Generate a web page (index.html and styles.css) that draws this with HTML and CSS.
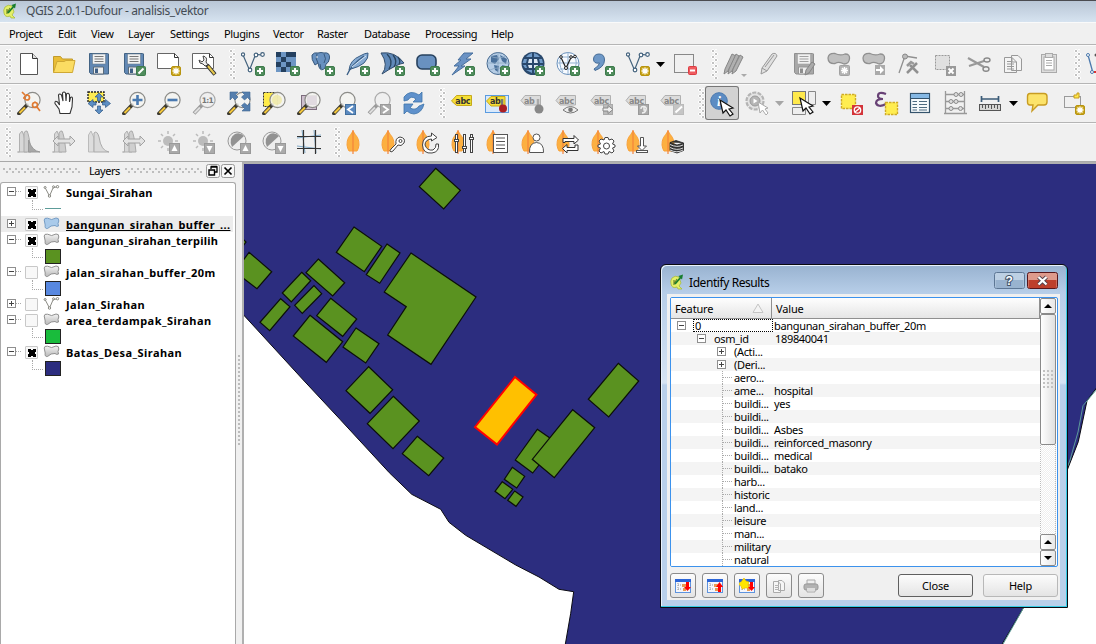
FILE: index.html
```html
<!DOCTYPE html>
<html lang="id">
<head>
<meta charset="utf-8">
<title>QGIS 2.0.1-Dufour - analisis_vektor</title>
<link rel="stylesheet" href="styles.css">
</head>
<body>
<svg class="defs" width="0" height="0">
  <defs>
    <linearGradient id="grey" x1="0" y1="0" x2="0" y2="1"><stop offset="0" stop-color="#f4f4f4"/><stop offset="1" stop-color="#b9b9b9"/></linearGradient>
    <symbol id="logo" viewBox="0 0 16 16"><path d="M3 4Q6 1 10 3L12 9L10 12L13 15H9L8 13Q3 15 2 10Q1 7 3 4Z" fill="#e4ef68" stroke="#a3b832" stroke-width=".7"/><path d="M5 10L8 5M5 6V11" stroke="#68852b" stroke-width="1.200"/><path d="M6 10L12 3" stroke="#167c2c" stroke-width="1.700"/><path d="M9.500 2L14 .5L13 5.500Z" fill="#167c2c"/></symbol>
    <symbol id="plus" viewBox="0 0 24 24"><rect x="14.500" y="14.500" width="9" height="9" rx="1.500" fill="#4f8c5c" stroke="#3d7b4b"/><path d="M19 16V22M16 19H22" stroke="#fff" stroke-width="2"/></symbol>
    <symbol id="star" viewBox="0 0 24 24"><rect x="14.500" y="14.500" width="9" height="9" rx="1.500" fill="#c9a51c" stroke="#b79410"/><path d="M19 15.500V22.500M15.500 19H22.500M16.500 16.500L21.500 21.500M21.500 16.500L16.500 21.500" stroke="#fff" stroke-width="1.300"/></symbol>
    <symbol id="greystar" viewBox="0 0 24 24"><rect x="12.500" y="13.500" width="10" height="10" rx="1" fill="#b3b3b3" stroke="#a2a2a2"/><path d="M17.500 15V22M14 18.500H21M15 16L20 21M20 16L15 21" stroke="#fff" stroke-width="1.400"/></symbol>
    <symbol id="handle" viewBox="0 0 24 24"><path d="M10 14L2 22.500" stroke="#3c3a30" stroke-width="3.800" stroke-linecap="round"/><path d="M8 16.500L2.500 22" stroke="#f3c63c" stroke-width="2.200"/></symbol>
    <symbol id="lens" viewBox="0 0 24 24"><use href="#handle"/><circle cx="15.500" cy="9" r="7.600" fill="#f4f4f0" fill-opacity=".88" stroke="#8c8c88" stroke-width="1.200"/></symbol>
    <symbol id="greylens" viewBox="0 0 24 24"><path d="M10 14L2 22.500" stroke="#999" stroke-width="3.800"/><path d="M8 16.500L2.500 22" stroke="#ddd" stroke-width="2"/><circle cx="15.500" cy="9" r="7.600" fill="#efefef" stroke="#aaa" stroke-width="1.200"/></symbol>
    <symbol id="vee" viewBox="0 0 24 24"><path d="M2 3L8.500 18L14 4Q15 2 21 3" fill="none" stroke="#44637e" stroke-width="1.200"/><g fill="#fff" stroke="#44637e" stroke-width="1.200"><circle cx="2" cy="2.500" r="1.600"/><circle cx="9" cy="18" r="1.800"/><circle cx="15" cy="3" r="1.800"/><circle cx="21.500" cy="2.500" r="1.800"/></g></symbol>
    <symbol id="leaf" viewBox="0 0 24 24"><path d="M7 1Q9.500 5 11.500 7.500Q13.200 11 13 15Q12.500 19 11 21H3Q1.500 19 1 15Q.8 11 2.500 7.500Q4.500 5 7 1Z" fill="#fcb041" stroke="#f9a23a"/><path d="M7 0V24" stroke="#f3843a" stroke-width="1.200"/></symbol>
    <symbol id="tag" viewBox="0 0 24 24"><path d="M1.500 10L6.500 4.500H21.500V14.500H6.500Z" fill="#f5de35" stroke="#c7a91b"/><text x="5.300" y="12.700" class="abc">abc</text></symbol>
    <symbol id="greytag" viewBox="0 0 24 24"><path d="M1 9.500L5 4.500H20.500V14H5Z" fill="#dcdcdc" stroke="#b0b0b0"/><text x="4" y="12.600" class="abc abc-off">abc</text></symbol>
    <symbol id="disk" viewBox="0 0 24 24"><path d="M2.500 1.500H20.500Q22 1.500 21.500 3V22H4L2.500 20.500Z" fill="#6288b4" stroke="#426384"/><rect x="5.500" y="2" width="13" height="10" fill="#f2f2f2" stroke="#6a7e90" stroke-width=".6"/><path d="M7.500 4.500H16.500M7.500 7H16.500M7.500 9.500H16.500" stroke="#777"/><path d="M6.500 22V15H16.500V22Z" fill="#eee" stroke="#5a6b7a"/><rect x="8" y="16.500" width="3" height="4.500" fill="#3e5f85"/></symbol>
    <symbol id="cursor" viewBox="0 0 24 24"><path d="M8 7L11 20L14 17L18 23L21 21L17 16L21 15Z" fill="#fff" stroke="#111" stroke-width="1.200"/></symbol>
    <symbol id="histA" viewBox="0 0 24 24"><path d="M.5 22H2.500V4L5 1L7 6Q9 16 10 22Z" fill="#d8d8d8" stroke="#b0b0b0"/><path d="M7 22V3Q8 .5 10 1Q12 4 14 22Z" fill="#cfcfcf" stroke="#aaa"/></symbol>
    <symbol id="blob" viewBox="0 0 24 24"><path d="M1 6Q1.500 1 8 1.500Q13 4 18 2Q23 2 22.500 6.500Q22 12 17 12Q12 9 8 11.500Q1 12 1 6Z" fill="#c0c0c0" stroke="#909090" stroke-width="1.300"/></symbol>
    <symbol id="poly" viewBox="0 0 16 13"><path d="M.7 3Q.7 .7 4 1.200Q8 4 12.500 1Q15.600 .8 15.300 4L14.500 6.500L15 9Q13 10 11.500 8.500Q7.500 8 4 11.500Q1 12 1.700 8Z" fill="url(#grey)" stroke="#909090"/></symbol>
    <symbol id="polyblue" viewBox="0 0 16 13"><path d="M.7 3Q.7 .7 4 1.200Q8 4 12.500 1Q15.600 .8 15.300 4L14.500 6.500L15 9Q13 10 11.500 8.500Q7.500 8 4 11.500Q1 12 1.700 8Z" fill="#a9caea" stroke="#769dc5"/></symbol>
    <symbol id="line" viewBox="0 0 16 13"><path d="M1.500 2.500L6 11L9.500 3L14 1.500" fill="none" stroke="#8b8b84"/><g fill="#fff" stroke="#85857e"><circle cx="1.600" cy="2.500" r="1"/><circle cx="6" cy="11" r="1.200"/><circle cx="10" cy="1.800" r="1"/><circle cx="14" cy="1.700" r="1.200"/></g></symbol>
    <symbol id="tree" viewBox="0 0 16 16"><rect x=".5" y="1.500" width="15" height="13" fill="#f5f6fb" stroke="#5e93dd"/><path d="M0 1H16V4H0Z" fill="#2b65d8"/><path d="M3 5V13M3 7H6M3 11H6" stroke="#999" stroke-dasharray="1 1"/><path d="M7 6H11V9H7ZM8 10H11V13H8Z" fill="#e99a50"/></symbol>
  </defs>
</svg>

<div class="app">
  <header class="titlebar"><svg width="16" height="16"><use href="#logo"/></svg><span>QGIS 2.0.1-Dufour - analisis_vektor</span></header>
  <nav class="menu"><span>Project</span><span>Edit</span><span>View</span><span>Layer</span><span>Settings</span><span>Plugins</span><span>Vector</span><span>Raster</span><span>Database</span><span>Processing</span><span>Help</span></nav>

  <div class="toolbar">
    <i class="grip first"></i>
    <svg class="tool" viewBox="0 0 24 24"><path d="M3.500 1.500H15.500L20.500 6.500V22.500H3.500Z" fill="#fff" stroke="#555"/><path d="M15.500 1.500V6.500H20.500" fill="#ddd" stroke="#333"/></svg>
    <svg class="tool" viewBox="0 0 24 24"><path d="M1.500 20.500V4.500H8.500L10.500 7H20.500V11" fill="#e9bd35" stroke="#c19a2b"/><path d="M1.500 20.500L5 9.500H12L14 8.500H23L20.500 20.500Z" fill="#fbdc62" stroke="#cfa834"/></svg>
    <svg class="tool" viewBox="0 0 24 24"><use href="#disk"/></svg>
    <svg class="tool" viewBox="0 0 24 24"><use href="#disk"/><rect x="14.500" y="14.500" width="9" height="9" rx="1" fill="#4f8c5c" stroke="#3d7b4b"/><path d="M16.500 21.500L21.500 16.500" stroke="#fff" stroke-width="2"/></svg>
    <svg class="tool" viewBox="0 0 24 24"><path d="M.5 1.500H17.500L21.500 5.500V16.500H.5Z" fill="#fff" stroke="#666"/><path d="M17.500 1.500V5.500H21.500" fill="none" stroke="#333"/><use href="#star"/></svg>
    <svg class="tool" viewBox="0 0 24 24"><path d="M.5 1.500H17.500L21.500 5.500V16.500H.5Z" fill="#fff" stroke="#666"/><path d="M17.500 1.500V5.500H21.500" fill="none" stroke="#333"/><path d="M15 13L23 22.500" stroke="#333" stroke-width="4"/><path d="M16 14L22.500 22" stroke="#e7c94d" stroke-width="2"/><path d="M11 4Q16 5 14 10L16 13L13 14L11 12Q7 12 7 8L10 10L12 8Z" fill="#eee" stroke="#444"/></svg>
    <i class="grip"></i>
    <svg class="tool" viewBox="0 0 24 24"><use href="#vee"/><use href="#plus"/></svg>
    <svg class="tool" viewBox="0 0 24 24"><path d="M0 0H20V20H0Z" fill="#6d96c4"/><path d="M0 0H5V5H0ZM10 0H20V5H10ZM5 5H10V10H5ZM0 10H5V15H0ZM10 10H15V15H10ZM5 15H10V20H5Z" fill="#24405f"/><use href="#plus"/></svg>
    <svg class="tool" viewBox="0 0 24 24"><path d="M1 3Q3 0 7 1Q10 0 13 1Q19 0 18.500 6Q18 11 15 12L14 16Q10 20 8 15L7 11L4 13Q0 7 1 3Z" fill="#6790bf" stroke="#38597d"/><path d="M6 2Q4 7 7 11M13 2Q16 7 13 11M9 12L10 17" fill="none" stroke="#38597d"/><circle cx="6" cy="5" r=".8" fill="#fff"/><use href="#plus"/></svg>
    <svg class="tool" viewBox="0 0 24 24"><path d="M3 18Q4 8 14 4Q19 1 22 1Q23 6 18 11Q13 15 5 17Z" fill="#86aad2" stroke="#3b5f86"/><path d="M1 23Q5 13 18 4" fill="none" stroke="#3b5f86" stroke-width="1.300"/><path d="M6 15Q12 10 20 4" stroke="#d9e6f3" fill="none"/><use href="#plus"/></svg>
    <svg class="tool" viewBox="0 0 24 24"><path d="M0 1Q14 -1 23 11Q16 12 1 22Q8 13 0 1Z" fill="#6089b8" stroke="#304b6a"/><path d="M6 2Q13 9 8 17M12 3Q17 9 13 15M17 5Q20 9 18 12" fill="none" stroke="#28445f" stroke-width="1.300"/><use href="#plus"/></svg>
    <svg class="tool" viewBox="0 0 24 24"><rect x="1" y="3" width="19" height="14" rx="5" fill="#6991c0" stroke="#27415e" stroke-width="1.600"/><use href="#plus"/></svg>
    <svg class="tool" viewBox="0 0 24 24"><path d="M13 1H22L15 7H20L10 14H14L1 23L8 14H3L10 8H7Z" fill="#6a92c4" stroke="#476f9d"/><use href="#plus"/></svg>
    <svg class="tool" viewBox="0 0 24 24"><circle cx="12" cy="11.500" r="11" fill="#b6cde5" stroke="#46698f"/><path d="M5 4L11 3L13 7L9 12L5 10ZM14 3L21 7L20 12L16 9ZM8 13L13 14L12 20L9 18ZM16 13L20 14L17 17Z" fill="#49709b"/><path d="M1 11H23M12 0V22M4 4Q12 8 20 4M4 18Q12 14 20 18" fill="none" stroke="#8ba7c2" stroke-width=".8"/><use href="#plus"/></svg>
    <svg class="tool" viewBox="0 0 24 24"><circle cx="12" cy="11.500" r="11.500" fill="#29486c"/><g fill="#6f9ac8"><path d="M11 1V5H5Q7 2 11 1ZM13 1V5H19Q17 2 13 1ZM3 7H6L5 11H1.500ZM18 7H21L22 11H19ZM2 13H5L6 16H4ZM19 13H22L20 16H18ZM5 18H11V21ZM13 18H19L13 21Z"/></g><path d="M8 7H11V11H7ZM13 7H16L17 11H13ZM7 13H11V16H8ZM13 13H17L16 16H13Z" fill="#dce8f4"/><use href="#plus"/></svg>
    <svg class="tool" viewBox="0 0 24 24"><circle cx="12" cy="11.500" r="11" fill="#f8fbff" stroke="#6990bb"/><path d="M1 11H23M12 0V22M4 5H20M4 17H20M6 3Q1 11 7 20M18 3Q23 11 17 20" fill="none" stroke="#91b1d1"/><path d="M5 5.500L10 16L15 5.500L20 4.500" fill="none" stroke="#222" stroke-width="1.200"/><g fill="#fff" stroke="#222"><circle cx="5" cy="5" r="1.300"/><circle cx="10" cy="16" r="1.500"/><circle cx="15" cy="5" r="1.300"/><circle cx="19" cy="4.500" r="1.300"/></g><use href="#plus"/></svg>
    <svg class="tool" viewBox="0 0 24 24"><path d="M8 2Q13.500 2 13.500 8Q13.500 15 4 18.500L3 17Q8 14 8.500 11Q2.500 12 2.500 7Q3 2 8 2Z" fill="#6e98c7" stroke="#456b95"/><use href="#plus"/></svg>
    <svg class="tool" viewBox="0 0 24 24"><use href="#vee"/><use href="#star"/></svg>
    <i class="drop wide"></i>
    <svg class="tool" viewBox="0 0 24 24"><rect x=".5" y="2.500" width="19" height="18" fill="none" stroke="#888"/><rect x="14.500" y="14.500" width="8" height="8" rx="1" fill="#ef5c60" stroke="#dc3d43"/><path d="M16 18.500H21" stroke="#fff" stroke-width="2"/></svg>
    <i class="grip"></i>
    <svg class="tool short" viewBox="0 0 24 24"><g stroke="#868686" fill="#b0b0b0"><path d="M1 22L2 17L9 2L13 4L5 19Z"/><path d="M5 22L6 17L13 2L16 4L9 19Z"/><path d="M9 22L10 17L17 3L20 5L13 19Z"/></g><path d="M18 22H24L21 25Z" fill="#aaa"/></svg>
    <svg class="tool" viewBox="0 0 24 24"><path d="M4 22L5 16L15 2Q19 0 20 4L10 19Z" fill="#e0e0e0" stroke="#999"/><path d="M5 16L10 19M8 15L17 3" stroke="#999"/></svg>
    <svg class="tool" viewBox="0 0 24 24"><g class="desat"><use href="#disk"/></g><path d="M13 23L14 18L20 10L23 12L17 21Z" fill="#aaa" stroke="#858585"/></svg>
    <svg class="tool" viewBox="0 0 24 24"><use href="#blob"/><use href="#greystar"/></svg>
    <svg class="tool" viewBox="0 0 24 24"><use href="#blob"/><rect x="13" y="13" width="10" height="10" fill="#aaa"/><path d="M14 17H18V14L22 18L18 22V19H14Z" fill="#fff"/></svg>
    <svg class="tool" viewBox="0 0 24 24"><path d="M2 21L8 4L20 6" fill="none" stroke="#8f8f8f" stroke-width="1.300"/><circle cx="8" cy="4.500" r="2.500" fill="#bbb" stroke="#888"/><path d="M10 21L20 11M13 13L21 21" stroke="#909090" stroke-width="2.500"/><path d="M10 14L14 10L17 12" stroke="#999" stroke-width="2.500" fill="none"/></svg>
    <svg class="tool" viewBox="0 0 24 24"><rect x="3.500" y="3.500" width="14" height="14" fill="#e0e0e0" stroke="#999" stroke-dasharray="2 1"/><rect x="14" y="14" width="10" height="10" fill="#999"/><path d="M16.500 16.500L21.500 21.500M21.500 16.500L16.500 21.500" stroke="#fff" stroke-width="2"/></svg>
    <svg class="tool" viewBox="0 0 24 24"><path d="M1 6L17 15M2 14L20 8" stroke="#999" stroke-width="2.200"/><ellipse cx="20" cy="8" rx="3" ry="2" fill="#eee" stroke="#888" stroke-width="1.400"/><ellipse cx="19" cy="17" rx="3" ry="2.300" fill="#eee" stroke="#888" stroke-width="1.400"/></svg>
    <svg class="tool" viewBox="0 0 24 24"><path d="M9.500 3.500H16L19.500 7V18.500H9.500ZM2.500 5.500H10L14.500 10V20.500H2.500Z" fill="#f4f4f4" stroke="#999"/><path d="M10 5.500V10H14.500M5 9.500H9M5 12H12M5 14.500H12M5 17H12" fill="none" stroke="#999"/></svg>
    <svg class="tool" viewBox="0 0 24 24"><rect x="4.500" y="2.500" width="15" height="18" fill="#ddd" stroke="#aaa"/><rect x="7" y="5" width="10" height="13" fill="#fff" stroke="#aaa"/><rect x="8.500" y="1.500" width="7" height="4" fill="#ddd" stroke="#aaa"/><path d="M9 8.500H15M9 11H15M9 13.500H15" stroke="#aaa"/></svg>
    <i class="grip"></i>
    <svg class="tool" viewBox="0 0 24 24"><path d="M2 3L7 21" stroke="#4b79ad" stroke-width="1.300"/><circle cx="2" cy="3" r="1.500" fill="#fff" stroke="#4b79ad"/><circle cx="6" cy="20" r="1.500" fill="#fff" stroke="#4b79ad"/><path d="M8 20H12" stroke="#d33" stroke-width="2"/><circle cx="10" cy="3" r="1.500" fill="#555"/></svg>
  </div>

  <div class="toolbar">
    <i class="grip first"></i>
    <svg class="tool" viewBox="0 0 24 24"><use href="#lens"/><g fill="none" stroke="#e07a32" stroke-width="1.700"><circle cx="10" cy="6.500" r="2.500"/><circle cx="18" cy="14" r="2.500"/><path d="M5 1L8 4M20 16L23 20M10 3V4M6 7H7M18 10.500V12"/></g></svg>
    <svg class="tool" viewBox="0 0 24 24"><path d="M8 22.500L7 18L3 12.500Q2.500 9 5.500 11L7.500 14L6.500 4Q7.500 2 9.500 4L11 10L10.500 2Q12 0 13.500 2L14 10L14.500 3Q16.500 1 17.500 4L17.500 11L18.500 6.500Q20.500 5 20.500 8L20 16L18 22.500Z" fill="#fff" stroke="#333" stroke-width="1.100"/></svg>
    <svg class="tool" viewBox="0 0 24 24"><rect x="1" y="1" width="16" height="10" fill="#ffec52" stroke="#222" stroke-width="1.400" stroke-dasharray="2 1"/><path d="M12 2L16 6H13.500V10H10.500V6H8ZM12 23L16 19H13.500V15H10.500V19H8ZM1 12.500L6 8.500V11H9V14H6V16.500ZM23.500 12.500L18.500 8.500V11H15.500V14H18.500V16.500Z" fill="#5e8fc4" stroke="#315a86" stroke-width=".7"/></svg>
    <svg class="tool" viewBox="0 0 24 24"><use href="#lens"/><path d="M15.500 4V14M10.500 9H20.500" stroke="#4a7ab0" stroke-width="2.600"/></svg>
    <svg class="tool" viewBox="0 0 24 24"><use href="#lens"/><path d="M10.500 9H20.500" stroke="#4a7ab0" stroke-width="2.600"/></svg>
    <svg class="tool" viewBox="0 0 24 24"><use href="#greylens"/><text x="9.800" y="12" class="ratio">1:1</text></svg>
    <svg class="tool" viewBox="0 0 24 24"><use href="#lens"/><path d="M3 1H11L8.500 3.500L11 6L8 9L5.500 6.500L3 9ZM23 1V9L20.500 6.500L17.500 9L14.500 6L17.500 3.500L15 1ZM23 20H15L17.500 17.500L14.500 14.500L17.500 12L20.500 14.500L23 12Z" fill="#557fae" stroke="#3c6591" stroke-width=".6"/></svg>
    <svg class="tool" viewBox="0 0 24 24"><rect x="1.500" y="1.500" width="14" height="14" fill="#ffeb48" stroke="#333" stroke-dasharray="2 1"/><use href="#lens"/><circle cx="15" cy="9" r="5" fill="#eee79a" opacity=".7"/></svg>
    <svg class="tool" viewBox="0 0 24 24"><rect x="4.500" y="4.500" width="15" height="14" fill="#cdbfcd" stroke="#7d6c7d"/><use href="#lens"/><rect x="10" y="5" width="9.500" height="9" fill="#ddd4dd" opacity=".8"/></svg>
    <svg class="tool" viewBox="0 0 24 24"><use href="#lens"/><rect x="13.500" y="13.500" width="10" height="10" fill="#5b8ac0" stroke="#416f9e"/><path d="M21 15L16 18.500L21 22" fill="none" stroke="#fff" stroke-width="1.800"/></svg>
    <svg class="tool" viewBox="0 0 24 24"><use href="#greylens"/><rect x="13.500" y="13.500" width="10" height="10" fill="#aaa" stroke="#999"/><path d="M16 15L21 18.500L16 22" fill="none" stroke="#fff" stroke-width="1.800"/></svg>
    <svg class="tool" viewBox="0 0 24 24"><path d="M2 10V6Q8 -2 17 4L20 1V11H11L14 8Q9 4 6 9ZM22 13Q20 22 12 23Q8 23 5 20L2 23V13H11L8 17Q14 20 17 15Z" fill="#5f91cc" stroke="#3e73aa" stroke-width=".8"/></svg>
    <i class="grip"></i>
    <svg class="tool nudge" viewBox="0 0 24 24"><use href="#tag"/></svg>
    <svg class="tool nudge" viewBox="0 0 24 24"><rect x=".5" y="4.500" width="23" height="17" fill="#d9e9fb" stroke="#5a9be0"/><path d="M1.500 10L6 5.500H20V15H6Z" fill="#f5de35" stroke="#c7a91b"/><text x="5" y="13" class="abc">ab</text><path d="M17 8V15" stroke="#777" stroke-width="2.500"/><circle cx="18" cy="17.500" r="4" fill="#ab1f23"/></svg>
    <svg class="tool nudge" viewBox="0 0 24 24"><path d="M1 9.500L5 4.500H20.500V14H5Z" fill="#dcdcdc" stroke="#b0b0b0"/><text x="4" y="12.600" class="abc abc-off">ab</text><path d="M18 8V15" stroke="#aaa" stroke-width="2.500"/><circle cx="19" cy="18" r="4.500" fill="#888"/></svg>
    <svg class="tool nudge" viewBox="0 0 24 24"><use href="#greytag"/><path d="M8 19Q15.500 12 23 19Q15.500 25 8 19Z" fill="#eee" stroke="#777"/><circle cx="15.500" cy="18.700" r="2.300" fill="#777"/></svg>
    <svg class="tool nudge" viewBox="0 0 24 24"><use href="#greytag"/><rect x="13.500" y="13.500" width="9" height="10" fill="#bbb" stroke="#aaa"/><path d="M13 17H18V14.500L23 18.500L18 22.500V20H13Z" fill="#eee" stroke="#888"/></svg>
    <svg class="tool nudge" viewBox="0 0 24 24"><use href="#greytag"/><rect x="13.500" y="13.500" width="10" height="10" fill="#aaa" stroke="#999"/><path d="M16 18Q16 15 19 15.500Q22 16 21 19Q20 22 17 22M19 15.500V19H21" fill="none" stroke="#eee" stroke-width="1.500"/></svg>
    <svg class="tool nudge" viewBox="0 0 24 24"><use href="#greytag"/><rect x="13.500" y="13.500" width="10" height="10" fill="#c5c5c5" stroke="#bbb"/><path d="M15.500 21.500L22 15.500" stroke="#fff" stroke-width="2"/></svg>
    <i class="grip"></i>
    <svg class="tool active" viewBox="0 0 24 24"><circle cx="9" cy="10" r="8.300" fill="#5c8cc3" stroke="#4a79b0"/><text x="7" y="15" class="info">i</text><use href="#cursor" x="2" y="2"/></svg>
    <svg class="tool" viewBox="0 0 24 24"><circle cx="10" cy="10" r="8.500" fill="#e3e3e3" stroke="#b4b4b4" stroke-width="2.200" stroke-dasharray="4 1.300"/><circle cx="10" cy="10" r="5" fill="#b5b5b5" stroke="#999"/><path d="M8.500 7.500L12.500 10L8.500 12.500Z" fill="#fff"/><path d="M13 11L15 22L17.500 19L21 24L23 22L20 18L23 17Z" fill="#fff" stroke="#aaa"/></svg>
    <i class="drop off"></i>
    <svg class="tool" viewBox="0 0 24 24"><rect x=".5" y=".5" width="13" height="13" fill="#ffe94b" stroke="#777"/><path d="M16.500.5H23.500V13.500H16.500ZM.5 16.500H13.500V23.500H.5Z" fill="#eee" stroke="#888"/><use href="#cursor"/></svg>
    <i class="drop"></i>
    <svg class="tool" viewBox="0 0 24 24"><rect x="2.500" y="3.500" width="14" height="14" fill="#ffed50" stroke="#cfab25" stroke-width="1.400" stroke-dasharray="2.500 1"/><rect x="13" y="14" width="11" height="10" fill="#d3343a"/><circle cx="18.500" cy="19" r="3.200" fill="none" stroke="#fff" stroke-width="1.300"/><path d="M16 21L21 17" stroke="#fff" stroke-width="1.500"/></svg>
    <svg class="tool" viewBox="0 0 24 24"><path d="M12 3Q4 0 4 5Q4 8 9 8Q2 8 2 12Q4 17 12 13" fill="none" stroke="#684276" stroke-width="2.200"/><rect x="11.500" y="11.500" width="12" height="12" fill="#ffed50" stroke="#cfab25" stroke-width="1.400" stroke-dasharray="2.500 1"/></svg>
    <svg class="tool" viewBox="0 0 24 24"><rect x="1.500" y="2.500" width="19" height="19" fill="#f6fafc" stroke="#34536c" stroke-width="1.200"/><rect x="2" y="3" width="18" height="4" fill="#85b8e4"/><path d="M2 7.500H20" stroke="#34536c"/><path d="M3.500 10.500H8M3.500 13.500H8M3.500 16.500H8M3.500 19H8M10 10.500H18M10 13.500H18M10 16.500H18M10 19H18" stroke="#4d6b80"/></svg>
    <svg class="tool" viewBox="0 0 24 24"><path d="M1.500 0V22M20.500 0V22M0 22.500H23M1 3.500H21M1 10.500H21M1 17.500H21" stroke="#999" stroke-width="1.300"/><g fill="#ddd" stroke="#8c8c8c"><circle cx="12" cy="3.500" r="2"/><circle cx="17" cy="3.500" r="2"/><circle cx="7" cy="10.500" r="2"/><circle cx="12" cy="10.500" r="2"/><circle cx="7" cy="17.500" r="2"/><circle cx="16.500" cy="17.500" r="2"/></g></svg>
    <svg class="tool" viewBox="0 0 24 24"><path d="M2.500 5V11M19.500 5V11M2.500 8H19.500" stroke="#3b5b77" stroke-width="1.700"/><rect x=".5" y="13.500" width="21" height="6" fill="#d7d7d5" stroke="#555"/><path d="M3.500 14V17M6.500 14V18M9.500 14V17M12.500 14V18M15.500 14V17M18.500 14V18" stroke="#555"/></svg>
    <i class="drop"></i>
    <svg class="tool" viewBox="0 0 24 24"><path d="M4 2.500H18Q21 2.500 21 5.500V11Q21 14 18 14H12L6 20L7 14H4Q1.500 14 1.500 11V5.500Q1.500 2.500 4 2.500Z" fill="#fce36a" stroke="#c89c22" stroke-width="1.400"/></svg>
    <svg class="tool" viewBox="0 0 24 24"><rect x="3.500" y="5.500" width="16" height="11" fill="none" stroke="#444" stroke-dasharray="1 1"/><path d="M13 4H16V2H18V7H13Z" fill="#ffe94b" stroke="#c69b1e"/><use href="#star"/></svg>
  </div>

  <div class="toolbar third">
    <i class="grip first"></i>
    <svg class="tool" viewBox="0 0 24 24"><use href="#histA"/><path d="M11.500 22V10Q15 21 23 22Z" fill="#a8a8a8" stroke="#999"/></svg>
    <svg class="tool" viewBox="0 0 24 24"><use href="#histA"/><path d="M1 11L6 6V9H18V6L23 11L18 16V13H6V16Z" fill="#e3e3e3" stroke="#a2a2a2"/></svg>
    <svg class="tool" viewBox="0 0 24 24"><path d="M1.500 22V5L4 1L7 8V22Z" fill="#ddd" stroke="#bbb"/><path d="M7 22V3Q10 0 12 7Q14 21 22 22Z" fill="#dadada" stroke="#aaa"/></svg>
    <svg class="tool" viewBox="0 0 24 24"><use href="#histA"/><path d="M1 11L6 6V9H18V6L23 11L18 16V13H6V16Z" fill="#e3e3e3" stroke="#a2a2a2"/></svg>
    <svg class="tool" viewBox="0 0 24 24"><path d="M11 1V4M11 18V21M1 11H4M18 11H21M4 4L6 6M18 4L16 6M4 18L6 16" stroke="#bbb" stroke-width="1.500"/><circle cx="11" cy="11" r="5" fill="#bcbcbc"/><rect x="12.500" y="13.500" width="10" height="10" fill="#aaa" stroke="#999"/><path d="M17.500 15L20.500 21H14.500Z" fill="#fff"/></svg>
    <svg class="tool" viewBox="0 0 24 24"><path d="M11 1V4M11 18V21M1 11H4M18 11H21M4 4L6 6M18 4L16 6M4 18L6 16" stroke="#bbb" stroke-width="1.500"/><circle cx="11" cy="11" r="5" fill="#bcbcbc"/><rect x="12.500" y="13.500" width="10" height="10" fill="#aaa" stroke="#999"/><path d="M17.500 22L20.500 16H14.500Z" fill="#fff"/></svg>
    <svg class="tool" viewBox="0 0 24 24"><circle cx="10" cy="11" r="9" fill="#eee" stroke="#999"/><path d="M5 17Q1 8 8 4Q13 2 17 6Z" fill="#929292"/><rect x="13.500" y="13.500" width="10" height="10" fill="#aaa" stroke="#999"/><path d="M18.500 15L21.500 21H15.500Z" fill="#fff"/></svg>
    <svg class="tool" viewBox="0 0 24 24"><circle cx="10" cy="11" r="9" fill="#eee" stroke="#999"/><path d="M5 17Q1 8 8 4Q13 2 17 6Z" fill="#929292"/><rect x="13.500" y="13.500" width="10" height="10" fill="#aaa" stroke="#999"/><path d="M18.500 22L21.500 16H15.500Z" fill="#fff"/></svg>
    <svg class="tool" viewBox="0 0 24 24"><path d="M5 0L8 23M17 0L19 23M0 8L24 5M0 16L24 19" stroke="#81aac8"/><path d="M6.500 0V24M18.500 0V24M0 6.500H24M0 18.500H24" stroke="#333" stroke-width="1.200"/></svg>
    <i class="grip"></i>
    <svg class="tool" viewBox="0 0 24 24"><use href="#leaf"/></svg>
    <svg class="tool" viewBox="0 0 24 24"><use href="#leaf"/><path d="M10 22Q8 21 10 19L15 14Q14 8 19 7Q25 8 23 13Q20 17 17 15L12 21Z" fill="#fff" stroke="#444"/><circle cx="19.500" cy="11" r="1.500" fill="#fff" stroke="#444"/></svg>
    <svg class="tool" viewBox="0 0 24 24"><use href="#leaf"/><path d="M15.500 3L21 7.500L15.500 11V9Q9 9.500 9 15Q11 21 17 20Q20.500 18 20 14H22.500Q23.500 22 16 23Q7 24 6.500 15Q7 6 15.500 6Z" fill="#fff" stroke="#444"/></svg>
    <svg class="tool" viewBox="0 0 24 24"><use href="#leaf"/><g fill="#fff" stroke="#444"><rect x="4.500" y="4.500" width="2" height="18"/><rect x="12.500" y="4.500" width="2" height="18"/><rect x="19.500" y="4.500" width="2" height="18"/><rect x="3.500" y="9.500" width="4" height="2"/><rect x="11.500" y="16.500" width="4" height="2"/><rect x="18.500" y="7.500" width="4" height="2"/></g></svg>
    <svg class="tool" viewBox="0 0 24 24"><use href="#leaf"/><rect x="7.500" y="4.500" width="14" height="18" fill="#fff" stroke="#555"/><path d="M10 8H19M10 11.500H19M10 15H19M10 18.500H19" stroke="#555" stroke-width="1.200"/></svg>
    <svg class="tool" viewBox="0 0 24 24"><use href="#leaf"/><circle cx="15.500" cy="7.500" r="3.500" fill="#fff" stroke="#555"/><path d="M8.500 22.500Q8 13 15.500 12.500Q23 13 22.500 22.500Z" fill="#fff" stroke="#555"/></svg>
    <svg class="tool" viewBox="0 0 24 24"><use href="#leaf"/><path d="M7 12.500V8.500H18V5.500L22.500 10L18 14V11.500H9V12.500ZM22 15V20.500H11V23L6.500 18.500L11 14.500V17.500H19V15Z" fill="#fff" stroke="#333"/></svg>
    <svg class="tool" viewBox="0 0 24 24"><use href="#leaf"/><path d="M14 7.500H17L18 10L21 9L23 11L21.500 14L24 15V17L21.500 18L23 21L21 23L18 21.500L17 24H14L13 21.500L10 23L8 21L9.500 18L7 17V15L9.500 14L8 11L10 9L13 10Z" fill="#fff" stroke="#444"/><circle cx="15.500" cy="16" r="3" fill="#fff" stroke="#444"/></svg>
    <svg class="tool" viewBox="0 0 24 24"><use href="#leaf"/><path d="M14.500 7.500H17.500V16H20.500L16 20.500L11.500 16H14.500Z" fill="#fff" stroke="#555"/><rect x="10.500" y="20.500" width="11" height="2" fill="#fff" stroke="#555"/></svg>
    <svg class="tool" viewBox="0 0 24 24"><use href="#leaf"/><path d="M9 12.500L15 10.500L22.500 13L16 15ZM9 12.500V20.500L16 23L22.500 20.500V13" fill="#333" stroke="#222" stroke-width=".8"/><path d="M9 14.500Q16 18 22 15M9 17.500Q16 21 22 18M9 20Q16 23.500 22 20" fill="none" stroke="#eee" stroke-width=".9"/></svg>
  </div>

  <main class="work">
    <aside class="dock">
      <div class="dock-title"><i class="dots"></i><b>Layers</b><i class="dots"></i>
        <svg class="dock-btn" viewBox="0 0 14 14"><rect x=".5" y=".5" width="13" height="13" rx="2" fill="#f7f7f7" stroke="#999"/><path d="M5 5V3H11V8H9M4.800 2.500H11.200" fill="none" stroke="#000" stroke-width="1.300"/><path d="M3 6H8.500V11H3ZM2.500 6H9" fill="none" stroke="#000" stroke-width="1.400"/></svg>
        <svg class="dock-btn" viewBox="0 0 14 14"><rect x=".5" y=".5" width="13" height="13" rx="2" fill="#f7f7f7" stroke="#999"/><path d="M3.500 3.500L10.500 10.500M10.500 3.500L3.500 10.500" stroke="#000" stroke-width="1.700"/></svg>
      </div>
      <div class="layers">
        <div class="layer"><i class="exp"></i><i class="chk on"></i><svg class="kind"><use href="#line"/></svg><span>Sungai_Sirahan</span></div>
        <div class="legend"><i class="stroke"></i></div>
        <div class="layer current"><i class="exp more"></i><i class="chk on"></i><svg class="kind"><use href="#polyblue"/></svg><span>bangunan_sirahan_buffer_...</span></div>
        <div class="layer"><i class="exp"></i><i class="chk on"></i><svg class="kind"><use href="#poly"/></svg><span>bangunan_sirahan_terpilih</span></div>
        <div class="legend"><i class="swatch olive"></i></div>
        <div class="layer"><i class="exp"></i><i class="chk"></i><svg class="kind"><use href="#poly"/></svg><span class="roomy">jalan_sirahan_buffer_20m</span></div>
        <div class="legend"><i class="swatch blue"></i></div>
        <div class="layer"><i class="exp more"></i><i class="chk"></i><svg class="kind"><use href="#line"/></svg><span class="roomy">Jalan_Sirahan</span></div>
        <div class="layer"><i class="exp"></i><i class="chk"></i><svg class="kind"><use href="#poly"/></svg><span class="roomy">area_terdampak_Sirahan</span></div>
        <div class="legend"><i class="swatch green"></i></div>
        <div class="layer"><i class="exp"></i><i class="chk on"></i><svg class="kind"><use href="#poly"/></svg><span class="roomy">Batas_Desa_Sirahan</span></div>
        <div class="legend"><i class="swatch navy"></i></div>
      </div>
    </aside>
    <div class="splitter"><i></i></div>
    <section class="map">
      <svg viewBox="244 164 852 480" width="852" height="480">
        <rect x="244" y="164" width="852" height="480" fill="#2c2d7f"/>
        <g fill="#fff" stroke="#0a0a12">
          <path d="M243 314.300L303.300 380L340 419.300L389.300 472.700L411.700 494.300L440.700 509.300L449 522.300L465.700 535.300L515.700 565L539 577L559 589.300L573.700 591.700L570.700 613.300L565 646H240Z"/>
          <path d="M1098 386L1087 400.700L1078.300 441.700L1068 468L1023.300 608L1001 646H1100Z"/>
        </g>
        <path d="M1097 389L1083 405.700L1078 432L1070 460L1064 476M1024 607L1002.500 645" fill="none" stroke="#5d9c99"/>
        <g fill="#5a9220" stroke="#0b0f08" stroke-width="1.200">
          <path d="M435.700 168.300L460.300 190.300L443.700 209L419.300 186.700Z"/>
          <path d="M354 227L381.700 246.300L364.300 271.700L336.300 252.300Z"/>
          <path d="M387 244L400 253L379.700 283.300L366.300 274.700Z"/>
          <path d="M411 253L476 297L431 364.300L387.700 335L406.300 306.700L384.300 292Z"/>
          <path d="M249 252.300L271.700 271.700L257 288.700L235 272Z"/>
          <path d="M242 238L246 242L243 246Z"/>
          <path d="M318.300 259L344.700 282.700L332.700 296L306 272.700Z"/>
          <path d="M301.700 272.300L310.700 280.700L291.300 302L282.300 293Z"/>
          <path d="M314 285.700L321.700 293.700L302.300 313.300L294.700 305.300Z"/>
          <path d="M280.700 298.700L290 306.700L269.700 330.700L260 322.300Z"/>
          <path d="M330.700 298.300L356.700 319L342.700 336.300L316.700 315.700Z"/>
          <path d="M310 315.300L342.700 341.700L326.300 362.300L293.300 336Z"/>
          <path d="M356 328L379 343.700L365.700 363L343 347Z"/>
          <path d="M368.700 366.700L392.700 389.700L370 413.300L346 390.700Z"/>
          <path d="M393.300 396.300L419.300 421L393 448.700L367.300 423.700Z"/>
          <path d="M417.300 436.300L443.700 458L428.700 475.700L402.300 453.700Z"/>
          <path d="M537.300 429.300L556.700 442.700L532.700 473L515.300 460Z"/>
          <path d="M572.700 409.700L594.700 427.700L554.300 477.700L532.300 459.300Z"/>
          <path d="M618.300 363.300L638.700 381L608.700 417L588.300 399.300Z"/>
          <path d="M512.300 467.300L524.700 476.300L516.700 488L504.300 479.300Z"/>
          <path d="M502.300 481.700L512.700 489.300L505 498.700L495 491.300Z"/>
          <path d="M514.700 491L523 497L516 506.300L507.700 500.300Z"/>
        </g>
        <path d="M515 377L536.500 394.700L497 444.500L475 427Z" fill="#ffc000" stroke="#f00" stroke-width="2"/>
      </svg>
    </section>
  </main>

  <section class="dialog">
    <header class="dlg-title"><svg width="16" height="16"><use href="#logo"/></svg><span>Identify Results</span>
      <svg class="cap" viewBox="0 0 31 17"><rect x=".5" y=".5" width="30" height="16" rx="2" fill="#bdd0e4" stroke="#5d7795"/><rect x="1.500" y="8" width="28" height="8" fill="#99b3cf"/><text x="11.500" y="13" class="qm">?</text></svg>
      <svg class="cap" viewBox="0 0 31 17"><rect x=".5" y=".5" width="30" height="16" rx="2" fill="#de9a8c" stroke="#57161b"/><rect x="1.500" y="8" width="28" height="8" fill="#bd3f2c"/><path d="M11.500 5L19.500 12.500M19.500 5L11.500 12.500" stroke="#54424c" stroke-width="4"/><path d="M11.500 5L19.500 12.500M19.500 5L11.500 12.500" stroke="#fff" stroke-width="2.300"/></svg>
    </header>
    <div class="client">
      <div class="results">
        <div class="table">
          <div class="head"><span>Feature<svg width="12" height="10" viewBox="0 0 12 10"><path d="M6 1L1 9.500H11Z" fill="#f3f3f3" stroke="#c4c4c4"/></svg></span><span>Value</span></div>
          <div class="r l0"><i class="exp"></i><span class="focus">0</span><em>bangunan_sirahan_buffer_20m</em></div>
          <div class="r l1"><i class="exp"></i><span>osm_id</span><em>189840041</em></div>
          <div class="r l2"><i class="exp more"></i><span>(Acti...</span></div>
          <div class="r l2"><i class="exp more"></i><span>(Deri...</span></div>
          <div class="r l2"><i class="twig"></i><span>aero...</span></div>
          <div class="r l2"><i class="twig"></i><span>ame...</span><em>hospital</em></div>
          <div class="r l2"><i class="twig"></i><span>buildi...</span><em>yes</em></div>
          <div class="r l2"><i class="twig"></i><span>buildi...</span></div>
          <div class="r l2"><i class="twig"></i><span>buildi...</span><em>Asbes</em></div>
          <div class="r l2"><i class="twig"></i><span>buildi...</span><em>reinforced_masonry</em></div>
          <div class="r l2"><i class="twig"></i><span>buildi...</span><em>medical</em></div>
          <div class="r l2"><i class="twig"></i><span>buildi...</span><em>batako</em></div>
          <div class="r l2"><i class="twig"></i><span>harb...</span></div>
          <div class="r l2"><i class="twig"></i><span>historic</span></div>
          <div class="r l2"><i class="twig"></i><span>land...</span></div>
          <div class="r l2"><i class="twig"></i><span>leisure</span></div>
          <div class="r l2"><i class="twig"></i><span>man...</span></div>
          <div class="r l2"><i class="twig"></i><span>military</span></div>
          <div class="r l2 last"><i class="twig"></i><span>natural</span></div>
        </div>
        <div class="scroll"><i class="arrow up"></i><i class="thumb"><b></b></i><i class="track"></i><i class="arrow up"></i><i class="arrow down"></i></div>
      </div>
      <footer class="actions">
        <button class="sq"><svg viewBox="0 0 16 16"><use href="#tree"/><path d="M11 4H14V9H16L12.500 13L9 9H11Z" fill="#f00"/></svg></button>
        <button class="sq"><svg viewBox="0 0 16 16"><use href="#tree"/><path d="M11 14V9H9L12.500 4L16 9H14V14Z" fill="#f00"/></svg></button>
        <button class="sq"><svg viewBox="0 0 16 16"><use href="#tree"/><path d="M5 0L7 3L10 4L9 7L10 10L6 10L3 11L2 8L-1 6L2 4Z" fill="#ffe600" stroke="#e8b500" stroke-width=".6"/><path d="M11 4H14V9H16L12.500 13L9 9H11Z" fill="#f00"/></svg></button>
        <button class="sq"><svg viewBox="0 0 16 16"><path d="M7.500 2.500H11L13.500 5V12.500H7.500ZM2.500 3.500H7L9.500 6V14.500H2.500Z" fill="#f6f6f6" stroke="#aaa"/><path d="M4 7.500H8M4 9.500H8M4 11.500H8" stroke="#b5b5b5"/></svg></button>
        <button class="sq"><svg viewBox="0 0 16 16"><path d="M4 2H12V6H4ZM4 10H12V14H4Z" fill="#eee" stroke="#aaa"/><rect x="1" y="6" width="14" height="6" rx="2" fill="#b2b2b2" stroke="#999"/><rect x="4" y="10" width="8" height="3" fill="#ddd"/></svg></button>
        <button class="push default">Close</button><button class="push">Help</button>
      </footer>
    </div>
  </section>
</div>
</body>
</html>
```
FILE: styles.css
```css
* { box-sizing: border-box; }
body { margin: 0; width: 1096px; height: 644px; overflow: hidden; background: #f0f0f0; color: #000; font: 11px "Noto Sans", "Open Sans", sans-serif; white-space: nowrap; }
i, em { font-style: normal; }
.defs { position: absolute; }
.app { position: relative; width: 1096px; height: 644px; display: flex; flex-direction: column; overflow: hidden; }
.titlebar { height: 22px; flex: none; border-top: 1px solid #4b4b50; background: linear-gradient(#b9c6d6, #d6e3f0); display: flex; align-items: center; padding: 0 0 2px 2px; gap: 8px; font-size: 12px; letter-spacing: -.38px; color: #444c55; }
.menu { height: 22px; flex: none; padding-left: 9px; border-top: 1px solid #fafafa; display: grid; grid-template-columns: 49px 33px 37px 42px 54px 49px 44px 47px 61px 66px 40px; align-items: center; letter-spacing: -.38px; line-height: 20px; }
.menu span { padding-top: 1px; }
.toolbar { height: 39px; flex: none; display: flex; align-items: flex-start; padding-top: 2px; border-top: 1px solid #b5b5b5; box-shadow: inset 0 1px #fbfbfb; overflow: hidden; }
.tool { flex: none; width: 35px; height: 34px; padding: 5px 6px 5px 5px; overflow: visible; }
.tool.short { width: 34px; padding-right: 5px; }
.tool.nudge { padding: 5px 7px 5px 4px; }
.tool.active { width: 34px; margin-right: 1px; padding-right: 5px; border-radius: 3px; box-shadow: inset 0 0 0 1px #777; background: #d2d2d2; }
.grip { flex: none; width: 14px; height: 30px; margin-top: 2px; background: radial-gradient(circle at 2px 2px, #c2c2c2 1px, #fff 1.6px, transparent 2px) 7px 0 / 4px 6px repeat-y, radial-gradient(circle at 2px 2px, #c2c2c2 1px, #fff 1.6px, transparent 2px) 10px 3px / 4px 6px repeat-y; }
.grip.first { width: 12px; background-position: 5px 0, 8px 3px; }
.drop { flex: none; width: 12px; height: 34px; background: #000; clip-path: polygon(0 15px, 9px 15px, 4.5px 20px); }
.drop.wide { width: 13px; }
.drop.off { background: #a6a6a6; }
.abc { font: bold 8px "DejaVu Sans", sans-serif; letter-spacing: -.3px; fill: #333; }
.abc-off { fill: #888; }
.ratio { font: bold 7.5px "DejaVu Sans", sans-serif; letter-spacing: -.8px; fill: #777; }
.info { font: italic bold 14px "Liberation Serif", serif; fill: #fff; }
.desat { filter: grayscale(1); opacity: .65; }
.work { flex: 1; min-height: 0; display: flex; border-top: 1px solid #a9a9a9; }
.dock { width: 236px; display: flex; flex-direction: column; }
.dock-title { height: 20px; padding: 1px 0 4px 3px; display: flex; align-items: center; letter-spacing: -.45px; }
.dock-title b { font-weight: normal; width: 28px; margin: 0 8px; }
.dots { width: 78px; height: 6px; background: radial-gradient(circle at 1px 1px, #bdbdbd 1px, transparent 1.4px) 0 0 / 6px 6px, radial-gradient(circle at 1px 1px, #bdbdbd 1px, transparent 1.4px) 3px 3px / 6px 6px; }
.dock-btn { width: 14px; height: 14px; flex: none; margin-left: 1px; }
.dots + .dock-btn { margin-left: 3px; }
.layers { flex: 1; background: #fff; border: 1px solid #a9a9a9; border-width: 1px 1px 0 1px; border-radius: 3px 3px 0 0; padding-top: 1px; }
.layer, .legend { height: 16px; display: flex; align-items: center; }
.layer { padding-left: 6px; font-weight: bold; background: repeating-linear-gradient(90deg, #aaa 0 1px, transparent 1px 2px) 15px 7px / 6px 1px no-repeat; letter-spacing: .25px; }
.layer.current { background: #ececec; text-decoration: underline; margin-right: 2px; letter-spacing: .4px; }
.layer span { margin-left: 6px; padding-top: 1px; line-height: 15px; }
.layer .roomy { letter-spacing: .45px; }
.exp { flex: none; width: 9px; height: 9px; border: 1px solid #8f8f8f; background: linear-gradient(#444, #444) center / 5px 1px no-repeat, #fff; }
.exp.more { background: linear-gradient(#444, #444) center / 5px 1px no-repeat, linear-gradient(#444, #444) center / 1px 5px no-repeat, #fff; }
.layer .exp { margin-top: -1px; }
.chk { flex: none; width: 13px; height: 13px; margin: 1px 5px 0 9px; border: 1px solid #c8c8c8; border-radius: 1px; background: #f8f8f8; }
.chk.on { background: linear-gradient(-45deg, transparent 36%, #000 36% 64%, transparent 64%) center / 8px 8px no-repeat, linear-gradient(45deg, transparent 36%, #000 36% 64%, transparent 64%) center / 8px 8px no-repeat, #f8f8f8; }
.kind { flex: none; width: 17px; height: 13px; margin-top: -2px; }
.legend { padding-left: 31px; }
.legend::before { content: ""; width: 10px; height: 9px; margin: -7px 2px 0 0; border: dotted #aaa; border-width: 0 0 1px 1px; }
.swatch { width: 16px; height: 15px; border: 1px solid #222; }
.olive { background: #5a9220; }
.blue { background: #5888e0; }
.green { background: #19bc3c; }
.navy { background: #2c2d7f; }
.stroke { width: 16px; height: 1px; background: #5d9c99; }
.splitter { width: 6px; padding: 193px 0 0 2px; }
.splitter i { display: block; width: 3px; height: 92px; background: radial-gradient(circle at 1px 1px, #bbb 1px, transparent 1.4px) 0 0 / 3px 4px; }
.map { width: 854px; border: solid #b0b0b0; border-width: 2px 0 0 2px; }
.map svg { display: block; }
.dialog { position: absolute; left: 660px; top: 264px; width: 408px; height: 344px; border: 1px solid #0a0a10; border-radius: 6px 6px 0 0; padding: 0 7px 7px 6px; background: linear-gradient(#98b2d0, #b7cee8 28px, #d6e4f3 118px, #b9d0ea 120px); box-shadow: inset -1px -1px #35cbe4, inset 1px 1px #e9f2fb; display: flex; flex-direction: column; }
.dlg-title { height: 29px; display: flex; align-items: center; padding: 4px 2px 0; font-size: 12px; letter-spacing: -.42px; }
.dlg-title span { margin-left: 4px; flex: 1; padding-top: 2px; }
.cap { width: 31px; height: 17px; margin: -3px 0 0 2px; }
.qm { font: bold 12px "Liberation Sans", sans-serif; fill: #fff; stroke: #41546a; stroke-width: 2px; paint-order: stroke; }
.client { flex: 1; background: #f0f0f0; padding: 3px 2px 0 3px; display: flex; flex-direction: column; }
.results { height: 270px; border: 1px solid #3c92ec; border-radius: 2px; background: #fff; display: flex; overflow: hidden; padding-right: 1px; }
.table { flex: 1; letter-spacing: -.33px; }
.head { height: 21px; display: flex; background: linear-gradient(#fefefe, #e5e5e5); border-bottom: 1px solid #8f8f8f; line-height: 21px; border-right: 1px solid #8f8f8f; letter-spacing: -.15px; }
.head span { width: 101px; padding-left: 4px; border-right: 1px solid #8f8f8f; display: flex; align-items: center; justify-content: space-between; padding-right: 7px; }
.head span + span { border: 0; }
.r { height: 13px; display: grid; align-items: center; line-height: 13px; background: #fff; }
.r.last { height: 15px; align-items: start; }
.r:nth-child(odd) { background-color: #f4f4f4; }
.r em { grid-column: 3; padding-left: 1px; }
.l0 { padding-left: 6px; grid-template-columns: 16px 80px 1fr; }
.l1 { padding-left: 26px; grid-template-columns: 17px 60px 1fr; }
.l2 { padding-left: 46px; grid-template-columns: 17px 39px 1fr; }
.focus { border: 1px dotted #000; height: 13px; line-height: 12px; padding-left: 1px; }
.twig { width: 10px; height: 13px; margin-left: 5px; border-left: 1px dotted #aaa; background: repeating-linear-gradient(90deg, #aaa 0 1px, transparent 1px 2px) 0 6px / 10px 1px no-repeat; }
.scroll { width: 16px; flex: none; display: flex; flex-direction: column; }
.arrow { height: 16px; border: 1px solid #8a8a8a; border-radius: 2px; background: linear-gradient(90deg, #fff, #e7e7e7); display: grid; place-items: center; }
.arrow::before { content: ""; border: 4px solid transparent; border-top-width: 0; border-bottom: 4px solid #000; }
.arrow.down::before { border-bottom-width: 0; border-top: 4px solid #000; }
.thumb { height: 131px; border: 1px solid #8a8a8a; border-radius: 2px; background: linear-gradient(90deg, #fff, #e0e0e0); display: grid; place-items: center; }
.thumb b { width: 11px; height: 19px; background: radial-gradient(circle at 1px 1px, #c2c2c2 .8px, transparent 1.2px) 0 0 / 4px 4px; }
.track { flex: 1; background: repeating-conic-gradient(#eee 0 25%, #fff 0 50%) 0 0 / 2px 2px; border: dotted #bbb; border-width: 0 1px; }
.actions { display: flex; align-items: center; padding-top: 6px; }
button { margin: 0; padding: 0; font: inherit; letter-spacing: -.2px; border: 1px solid #8b8b8b; border-radius: 3px; background: linear-gradient(#fcfcfc, #e4e4e4); }
.sq { width: 26px; height: 25px; margin-right: 6px; display: grid; place-items: center; }
.sq svg { width: 16px; height: 16px; }
.push { width: 75px; height: 23px; border-color: #b8b8b8; }
.push.default { border-color: #5f5f5f; margin-left: auto; margin-right: 10px; }
```
